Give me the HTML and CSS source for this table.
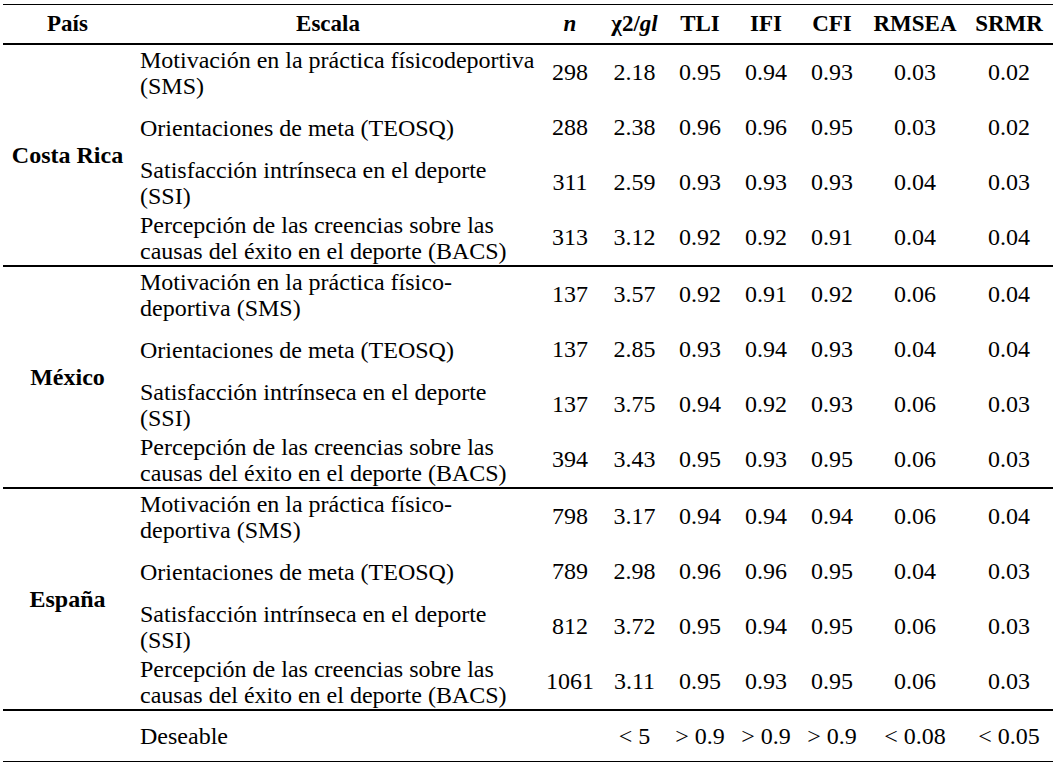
FILE: index.html
```html
<!DOCTYPE html>
<html lang="es">
<head>
<meta charset="utf-8">
<title>Tabla</title>
<link rel="stylesheet" href="styles.css">
</head>
<body>
<div class="table">
  <div class="head">
    <div class="c-pais">País</div>
    <div class="c-escala">Escala</div>
    <div><i>n</i></div>
    <div>χ2/<i>gl</i></div>
    <div>TLI</div>
    <div>IFI</div>
    <div>CFI</div>
    <div>RMSEA</div>
    <div>SRMR</div>
  </div>

  <div class="group">
    <div class="country">Costa Rica</div>
    <div class="rows">
      <div class="row"><div class="esc">Motivación en la práctica físicodeportiva<br>(SMS)</div><div>298</div><div>2.18</div><div>0.95</div><div>0.94</div><div>0.93</div><div>0.03</div><div>0.02</div></div>
      <div class="row"><div class="esc">Orientaciones de meta (TEOSQ)</div><div>288</div><div>2.38</div><div>0.96</div><div>0.96</div><div>0.95</div><div>0.03</div><div>0.02</div></div>
      <div class="row"><div class="esc">Satisfacción intrínseca en el deporte<br>(SSI)</div><div>311</div><div>2.59</div><div>0.93</div><div>0.93</div><div>0.93</div><div>0.04</div><div>0.03</div></div>
      <div class="row"><div class="esc">Percepción de las creencias sobre las<br>causas del éxito en el deporte (BACS)</div><div>313</div><div>3.12</div><div>0.92</div><div>0.92</div><div>0.91</div><div>0.04</div><div>0.04</div></div>
    </div>
  </div>

  <div class="group">
    <div class="country">México</div>
    <div class="rows">
      <div class="row"><div class="esc">Motivación en la práctica físico-<br>deportiva (SMS)</div><div>137</div><div>3.57</div><div>0.92</div><div>0.91</div><div>0.92</div><div>0.06</div><div>0.04</div></div>
      <div class="row"><div class="esc">Orientaciones de meta (TEOSQ)</div><div>137</div><div>2.85</div><div>0.93</div><div>0.94</div><div>0.93</div><div>0.04</div><div>0.04</div></div>
      <div class="row"><div class="esc">Satisfacción intrínseca en el deporte<br>(SSI)</div><div>137</div><div>3.75</div><div>0.94</div><div>0.92</div><div>0.93</div><div>0.06</div><div>0.03</div></div>
      <div class="row"><div class="esc">Percepción de las creencias sobre las<br>causas del éxito en el deporte (BACS)</div><div>394</div><div>3.43</div><div>0.95</div><div>0.93</div><div>0.95</div><div>0.06</div><div>0.03</div></div>
    </div>
  </div>

  <div class="group">
    <div class="country">España</div>
    <div class="rows">
      <div class="row"><div class="esc">Motivación en la práctica físico-<br>deportiva (SMS)</div><div>798</div><div>3.17</div><div>0.94</div><div>0.94</div><div>0.94</div><div>0.06</div><div>0.04</div></div>
      <div class="row"><div class="esc">Orientaciones de meta (TEOSQ)</div><div>789</div><div>2.98</div><div>0.96</div><div>0.96</div><div>0.95</div><div>0.04</div><div>0.03</div></div>
      <div class="row"><div class="esc">Satisfacción intrínseca en el deporte<br>(SSI)</div><div>812</div><div>3.72</div><div>0.95</div><div>0.94</div><div>0.95</div><div>0.06</div><div>0.03</div></div>
      <div class="row"><div class="esc">Percepción de las creencias sobre las<br>causas del éxito en el deporte (BACS)</div><div>1061</div><div>3.11</div><div>0.95</div><div>0.93</div><div>0.95</div><div>0.06</div><div>0.03</div></div>
    </div>
  </div>

  <div class="foot">
    <div class="c-pais"></div>
    <div class="esc">Deseable</div>
    <div></div>
    <div>&lt; 5</div>
    <div>&gt; 0.9</div>
    <div>&gt; 0.9</div>
    <div>&gt; 0.9</div>
    <div>&lt; 0.08</div>
    <div>&lt; 0.05</div>
  </div>
</div>
</body>
</html>
```

FILE: styles.css
```css
html, body {
  margin: 0;
  padding: 0;
  background: #ffffff;
}

body {
  font-family: "Liberation Serif", "Times New Roman", serif;
  font-size: 24px;
  color: #000;
}

.table {
  margin: 4px 0 0 3px;
  width: 1050px;
  border-top: 1px solid #000;
}

.head,
.foot {
  display: grid;
  grid-template-columns: 129px 406px 64px 65px 66px 66px 66px 100px 88px;
  align-items: center;
  text-align: center;
  white-space: nowrap;
}

.head {
  height: 38px;
  font-size: 23px;
  font-weight: 700;
  border-bottom: 2px solid #000;
}

.head .c-escala {
  padding: 0 22px 0 8px;
}

.foot {
  height: 50px;
  border-bottom: 1px solid #000;
}

.group {
  display: flex;
  border-bottom: 2px solid #000;
}

.country {
  width: 129px;
  flex: none;
  display: flex;
  align-items: center;
  justify-content: center;
  font-weight: 700;
}

.rows {
  flex: 1;
  display: flex;
  flex-direction: column;
}

.row {
  display: grid;
  grid-template-columns: 406px 64px 65px 66px 66px 66px 100px 88px;
  align-items: center;
  height: 55px;
  text-align: center;
  white-space: nowrap;
}

.esc {
  text-align: left;
  padding-left: 8px;
  line-height: 26px;
}
```
